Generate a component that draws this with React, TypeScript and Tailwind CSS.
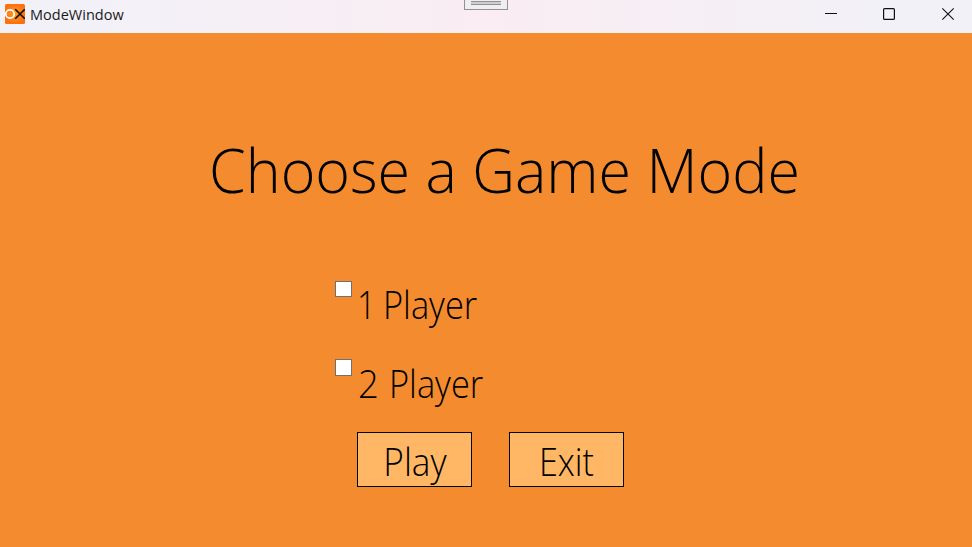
function AppIcon() {
  return (
    <svg width="20" height="20" viewBox="0 0 20 20" className="mt-1 ml-[5px] shrink-0">
      <defs>
        <radialGradient id="tile">
          <stop offset="0" stopColor="#ff9c20" />
          <stop offset="1" stopColor="#fc7010" />
        </radialGradient>
      </defs>
      <rect width="20" height="20" rx="1.5" fill="url(#tile)" />
      <circle cx="5" cy="10" r="4.2" fill="none" stroke="#fff" strokeWidth="1.8" />
      <path d="M10.2 5.2l9.6 9.6M19.8 5.2l-9.6 9.6" stroke="#111" strokeWidth="1.6" />
    </svg>
  );
}

function TitleBar() {
  return (
    <header className="relative flex h-[33px] bg-linear-to-r from-[#f3f1f8] from-10% via-[#faedf3] to-[#f2f1f7] to-90%">
      <AppIcon />
      <span className="ml-[5px] text-[14.5px] leading-[30px] tracking-[0.02px] text-[#1a1a1a]">ModeWindow</span>
      <div className="absolute left-[464px] top-0 flex h-[10px] w-[44px] justify-center border-x border-b border-[#929292] bg-[#efeff2]">
        <div className="mt-px h-1 w-[30px] border-y border-[#929292] bg-[#cfcfcf]" />
      </div>
      <svg width="148" height="28" viewBox="0 0 148 28" className="ml-auto" fill="none" stroke="#111">
        <path d="M1 13.5h12" />
        <rect x="59.6" y="8.6" width="10.8" height="10.8" rx="1" strokeWidth="1.2" />
        <path d="M118.3 8.3l11.4 11.4M129.7 8.3l-11.4 11.4" strokeWidth="1.1" />
      </svg>
    </header>
  );
}

function ModeOption({ count, box, digit, leading }: { count: number; box: string; digit: string; leading: string }) {
  return (
    <label className={`flex h-[50px] items-start text-[38px] font-light ${leading}`}>
      <input type="checkbox" className={`w-[17px] shrink-0 appearance-none border border-[#707070] bg-white ${box}`} />
      <span className={`origin-left ${digit}`}>{count}</span>
      <span className="origin-left scale-x-[0.905]">Player</span>
    </label>
  );
}

function ModeButton({ label, className }: { label: string; className: string }) {
  return (
    <button className="h-[55px] w-[115px] border border-black bg-[#ffb766] text-[38px] leading-[57px] font-light">
      <span className={`block ${className}`}>{label}</span>
    </button>
  );
}

export default function App() {
  return (
    <div className="flex h-[547px] w-[972px] flex-col overflow-hidden bg-[#f48b2e] font-['Open_Sans',sans-serif] text-black">
      <TitleBar />
      <main className="flex flex-col">
        <h1 className="mt-24 ml-[209px] h-20 origin-left scale-x-[0.962] text-[61.5px] leading-[80px] font-light whitespace-nowrap">
          Choose a Game Mode
        </h1>
        <section className="mt-[72px] ml-[335px] flex flex-col gap-7">
          <ModeOption count={1} box="h-4" digit="ml-[5px] w-[26px] scale-x-[0.87]" leading="leading-[46px]" />
          <ModeOption count={2} box="h-[17px]" digit="ml-[6px] w-[31px] scale-x-[0.96]" leading="leading-[48px]" />
        </section>
        <div className="mt-[23px] ml-[357px] flex gap-[37px]">
          <ModeButton label="Play" className="translate-x-[0.5px] scale-x-[0.925]" />
          <ModeButton label="Exit" className="scale-x-[0.9]" />
        </div>
      </main>
    </div>
  );
}
